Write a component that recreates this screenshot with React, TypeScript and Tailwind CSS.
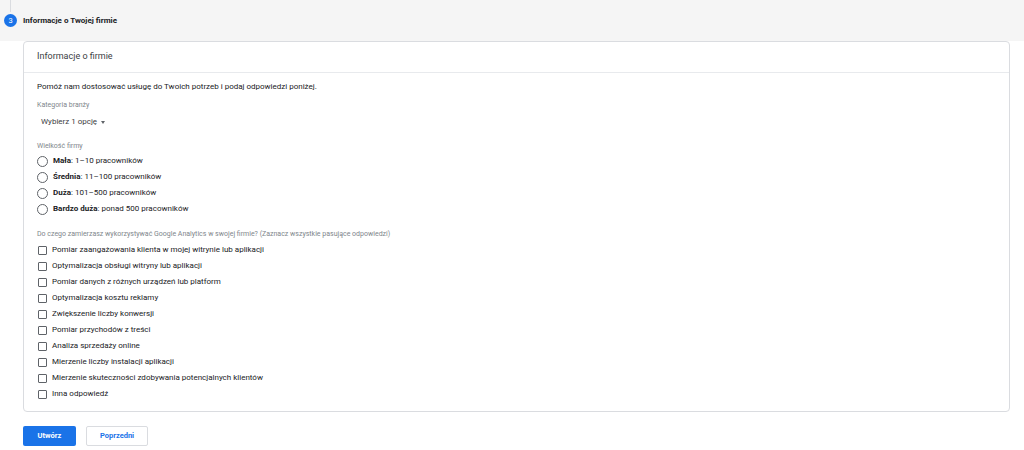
const sizes = [
  { bold: 'Mała', rest: ': 1–10 pracowników' },
  { bold: 'Średnia', rest: ': 11–100 pracowników' },
  { bold: 'Duża', rest: ': 101–500 pracowników' },
  { bold: 'Bardzo duża', rest: ': ponad 500 pracowników' },
];

const uses = [
  'Pomiar zaangażowania klienta w mojej witrynie lub aplikacji',
  'Optymalizacja obsługi witryny lub aplikacji',
  'Pomiar danych z różnych urządzeń lub platform',
  'Optymalizacja kosztu reklamy',
  'Zwiększenie liczby konwersji',
  'Pomiar przychodów z treści',
  'Analiza sprzedaży online',
  'Mierzenie liczby instalacji aplikacji',
  'Mierzenie skuteczności zdobywania potencjalnych klientów',
  'Inna odpowiedź',
];

export default function App() {
  return (
    <div
      className="w-[1024px] h-[450px] bg-white overflow-hidden text-[#202124]"
      style={{ fontFamily: 'Roboto, "Liberation Sans", sans-serif' }}
    >
      {/* step header */}
      <div className="relative h-[41px] bg-[#f5f5f5] flex items-center">
        <div className="absolute left-[10px] top-0 w-px h-[12px] bg-[#dadce0]" />
        <div className="ml-[4px] w-[13px] h-[13px] rounded-full bg-[#1a73e8] text-white text-[7.5px] flex items-center justify-center">
          3
        </div>
        <span className="ml-[6px] text-[8px] font-bold text-[#202124]">Informacje o Twojej firmie</span>
      </div>

      {/* card */}
      <div className="ml-[23px] mr-[14px] border border-[#dadce0] rounded-[4px]">
        <div className="h-[31px] flex items-center px-[13px] border-b border-[#e8eaed]">
          <span className="text-[9px] text-[#3c4043]">Informacje o firmie</span>
        </div>

        <div className="px-[13px] pt-[6px] pb-[9px]">
          <div className="h-[16px] flex items-center text-[8px]">
            Pomóż nam dostosować usługę do Twoich potrzeb i podaj odpowiedzi poniżej.
          </div>

          <div className="mt-[4px] h-[12px] flex items-center text-[7px] text-[#80868b]">Kategoria branży</div>
          <div className="mt-[3px] h-[16px] flex items-center pl-[4px] text-[8px] text-[#3c4043]">
            Wybierz 1 opcję
            <span className="ml-[4px] w-0 h-0 border-l-[2.5px] border-r-[2.5px] border-t-[3px] border-l-transparent border-r-transparent border-t-[#5f6368]" />
          </div>

          <div className="mt-[10px] h-[12px] flex items-center text-[7px] text-[#80868b]">Wielkość firmy</div>
          <div className="mt-[1px]">
            {sizes.map((s) => (
              <div key={s.bold} className="h-[16px] flex items-center text-[8px]">
                <span className="w-[11px] h-[11px] rounded-full border-[1.5px] border-[#5f6368] shrink-0" />
                <span className="ml-[5px]">
                  <span className="font-bold">{s.bold}</span>
                  {s.rest}
                </span>
              </div>
            ))}
          </div>

          <div className="mt-[11px] h-[12px] flex items-center text-[7px] text-[#80868b]">
            Do czego zamierzasz wykorzystywać Google Analytics w swojej firmie? (Zaznacz wszystkie pasujące odpowiedzi)
          </div>
          <div className="mt-[2px]">
            {uses.map((u) => (
              <div key={u} className="h-[16px] flex items-center text-[8px]">
                <span className="ml-px w-[9px] h-[9px] rounded-[1px] border border-[#5f6368] shrink-0" />
                <span className="ml-[5px]">{u}</span>
              </div>
            ))}
          </div>
        </div>
      </div>

      {/* actions */}
      <div className="ml-[23px] mt-[14px] flex gap-[10px]">
        <button className="w-[53px] h-[20px] rounded-[2px] bg-[#1a73e8] text-white text-[7.5px] font-bold">Utwórz</button>
        <button className="w-[62px] h-[20px] rounded-[2px] border border-[#dadce0] bg-white text-[#1a73e8] text-[7.5px] font-bold">
          Poprzedni
        </button>
      </div>
    </div>
  );
}
